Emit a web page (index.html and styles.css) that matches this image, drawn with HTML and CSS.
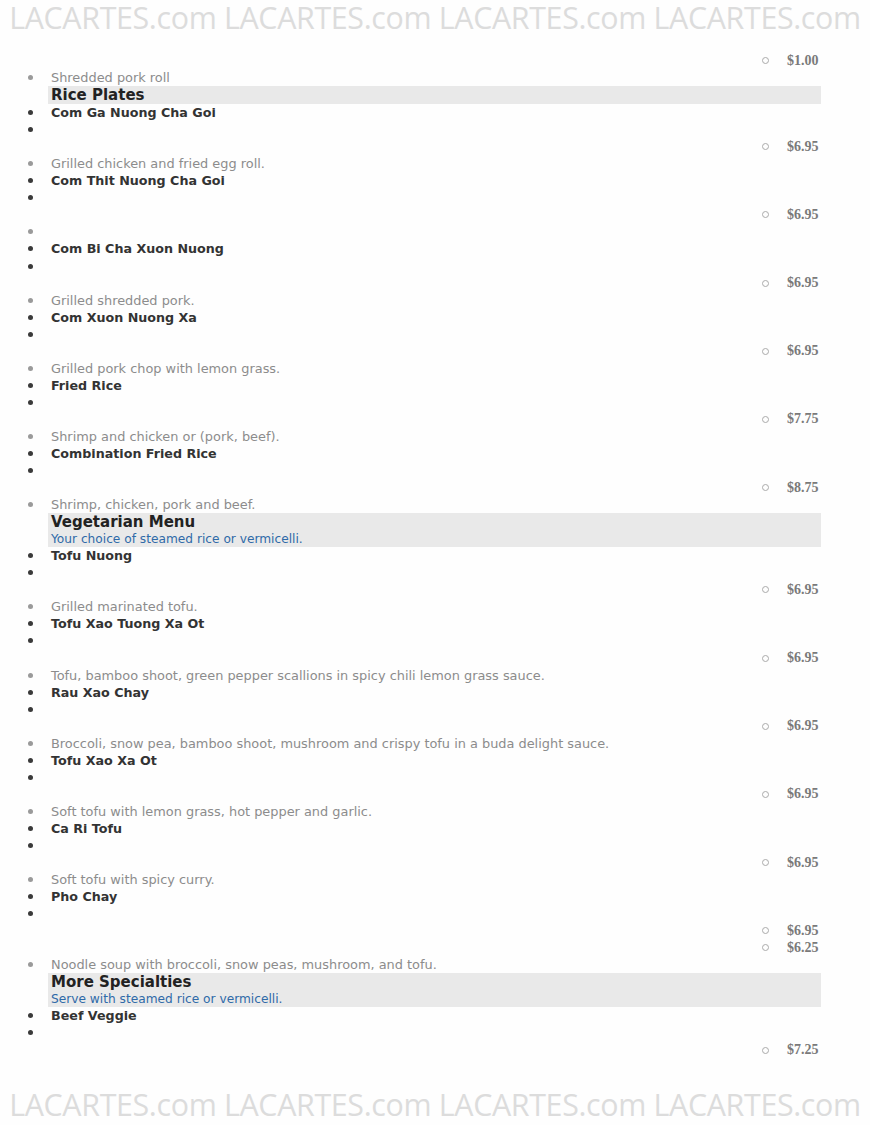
FILE: index.html
```html
<!DOCTYPE html>
<html>
<head>
<meta charset="utf-8">
<link rel="stylesheet" href="styles.css">
</head>
<body>
<div class="page">
  <div class="mark mark-top">LACARTES.com LACARTES.com LACARTES.com LACARTES.com</div>
  <ul class="menu">
    <li class="row price">$1.00</li>
    <li class="row desc">Shredded pork roll</li>
    <li class="section"><div class="head">Rice Plates</div></li>
    <li class="row name">Com Ga Nuong Cha Goi</li>
    <li class="row empty"></li>
    <li class="row price">$6.95</li>
    <li class="row desc">Grilled chicken and fried egg roll.</li>
    <li class="row name">Com Thit Nuong Cha Goi</li>
    <li class="row empty"></li>
    <li class="row price">$6.95</li>
    <li class="row desc"></li>
    <li class="row name">Com Bi Cha Xuon Nuong</li>
    <li class="row empty"></li>
    <li class="row price">$6.95</li>
    <li class="row desc">Grilled shredded pork.</li>
    <li class="row name">Com Xuon Nuong Xa</li>
    <li class="row empty"></li>
    <li class="row price">$6.95</li>
    <li class="row desc">Grilled pork chop with lemon grass.</li>
    <li class="row name">Fried Rice</li>
    <li class="row empty"></li>
    <li class="row price">$7.75</li>
    <li class="row desc">Shrimp and chicken or (pork, beef).</li>
    <li class="row name">Combination Fried Rice</li>
    <li class="row empty"></li>
    <li class="row price">$8.75</li>
    <li class="row desc">Shrimp, chicken, pork and beef.</li>
    <li class="section"><div class="head">Vegetarian Menu</div><div class="sub">Your choice of steamed rice or vermicelli.</div></li>
    <li class="row name">Tofu Nuong</li>
    <li class="row empty"></li>
    <li class="row price">$6.95</li>
    <li class="row desc">Grilled marinated tofu.</li>
    <li class="row name">Tofu Xao Tuong Xa Ot</li>
    <li class="row empty"></li>
    <li class="row price">$6.95</li>
    <li class="row desc">Tofu, bamboo shoot, green pepper scallions in spicy chili lemon grass sauce.</li>
    <li class="row name">Rau Xao Chay</li>
    <li class="row empty"></li>
    <li class="row price">$6.95</li>
    <li class="row desc">Broccoli, snow pea, bamboo shoot, mushroom and crispy tofu in a buda delight sauce.</li>
    <li class="row name">Tofu Xao Xa Ot</li>
    <li class="row empty"></li>
    <li class="row price">$6.95</li>
    <li class="row desc">Soft tofu with lemon grass, hot pepper and garlic.</li>
    <li class="row name">Ca Ri Tofu</li>
    <li class="row empty"></li>
    <li class="row price">$6.95</li>
    <li class="row desc">Soft tofu with spicy curry.</li>
    <li class="row name">Pho Chay</li>
    <li class="row empty"></li>
    <li class="row price">$6.95</li>
    <li class="row price">$6.25</li>
    <li class="row desc">Noodle soup with broccoli, snow peas, mushroom, and tofu.</li>
    <li class="section"><div class="head">More Specialties</div><div class="sub">Serve with steamed rice or vermicelli.</div></li>
    <li class="row name">Beef Veggie</li>
    <li class="row empty"></li>
    <li class="row price">$7.25</li>
  </ul>
  <div class="mark mark-bottom">LACARTES.com LACARTES.com LACARTES.com LACARTES.com</div>
</div>
</body>
</html>
```
FILE: styles.css
```css
html, body {
  margin: 0;
  padding: 0;
  background: #fefefe;
}
.page {
  width: 870px;
  height: 1125px;
  display: flex;
  flex-direction: column;
  font-family: "DejaVu Sans", Verdana, sans-serif;
}
.mark {
  font-family: "Open Sans", "Liberation Sans", sans-serif;
  font-size: 30.4px;
  color: #dcdcdc;
  white-space: nowrap;
  text-align: center;
  line-height: 36px;
  letter-spacing: -0.35px;
}
.mark-top {
  height: 36px;
}
.mark-bottom {
  margin-top: auto;
  padding-bottom: 2px;
}
.menu {
  list-style: none;
  margin: 0;
  padding: 16px 0 0 0;
}
.row {
  display: flex;
  align-items: center;
  height: 17.06px;
  font-size: 12.9px;
  white-space: nowrap;
}
.row::before {
  content: "";
  flex: none;
  width: 5px;
  height: 5px;
  border-radius: 50%;
  margin-left: 28px;
  margin-right: 18px;
  background: #3a3a3a;
}
.name {
  font-weight: bold;
  font-size: 12.7px;
  color: #333;
}
.desc {
  color: #8c8c8c;
}
.desc::before {
  background: #9a9a9a;
}
.price {
  font-family: "Liberation Serif", "Times New Roman", serif;
  font-weight: bold;
  font-size: 14px;
  color: #7a7a7a;
}
.price::before {
  width: 5px;
  height: 5px;
  background: none;
  border: 1px solid #aaa;
  margin-left: 762px;
  margin-right: 18px;
}
.section {
  margin-left: 48px;
  width: 773px;
  background: #e9e9e9;
  padding-left: 3px;
  box-sizing: border-box;
}
.head {
  font-size: 15px;
  font-weight: bold;
  color: #222;
  line-height: 18px;
}
.sub {
  font-size: 12.2px;
  color: #2f6aa8;
  line-height: 16px;
}
```
